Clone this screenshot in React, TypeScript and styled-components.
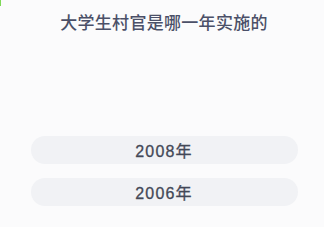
import React from 'react';
import styled, { createGlobalStyle } from 'styled-components';

const GlobalStyle = createGlobalStyle`
  html, body {
    margin: 0;
    padding: 0;
    background: #fbfbfc;
  }
`;

const options = ['2008年', '2006年'];

export default function App() {
  return (
    <>
      <GlobalStyle />
      <Page>
        <EdgeMark />
        <Question>大学生村官是哪一年实施的</Question>
        <OptionList>
          {options.map((o) => (
            <OptionButton key={o}>{o}</OptionButton>
          ))}
        </OptionList>
      </Page>
    </>
  );
}

const Page = styled.div`
  position: relative;
  width: 324px;
  height: 227px;
  box-sizing: border-box;
  padding-top: 12px;
  display: flex;
  flex-direction: column;
  align-items: center;
  font-family: 'Noto Sans CJK SC', 'Noto Sans', sans-serif;
  background: #fbfbfc;
`;

const EdgeMark = styled.div`
  position: absolute;
  left: 0;
  top: 0;
  width: 1px;
  height: 6px;
  background: #7ed957;
`;

const Question = styled.h1`
  margin: 0;
  font-size: 17px;
  line-height: 20px;
  font-weight: 500;
  color: #4b5068;
  letter-spacing: 0.3px;
  margin-left: 4px;
`;

const OptionList = styled.div`
  margin-top: 104px;
  display: flex;
  flex-direction: column;
  gap: 14px;
`;

const OptionButton = styled.div`
  width: 267px;
  height: 28px;
  border-radius: 14px;
  background: #f1f2f5;
  color: #434857;
  font-family: 'Liberation Sans', 'Noto Sans CJK SC', sans-serif;
  font-size: 16px;
  font-weight: 400;
  letter-spacing: 1.2px;
  -webkit-text-stroke: 0.3px #434857;
  display: flex;
  align-items: center;
  justify-content: center;
  margin-left: 4px;
`;
